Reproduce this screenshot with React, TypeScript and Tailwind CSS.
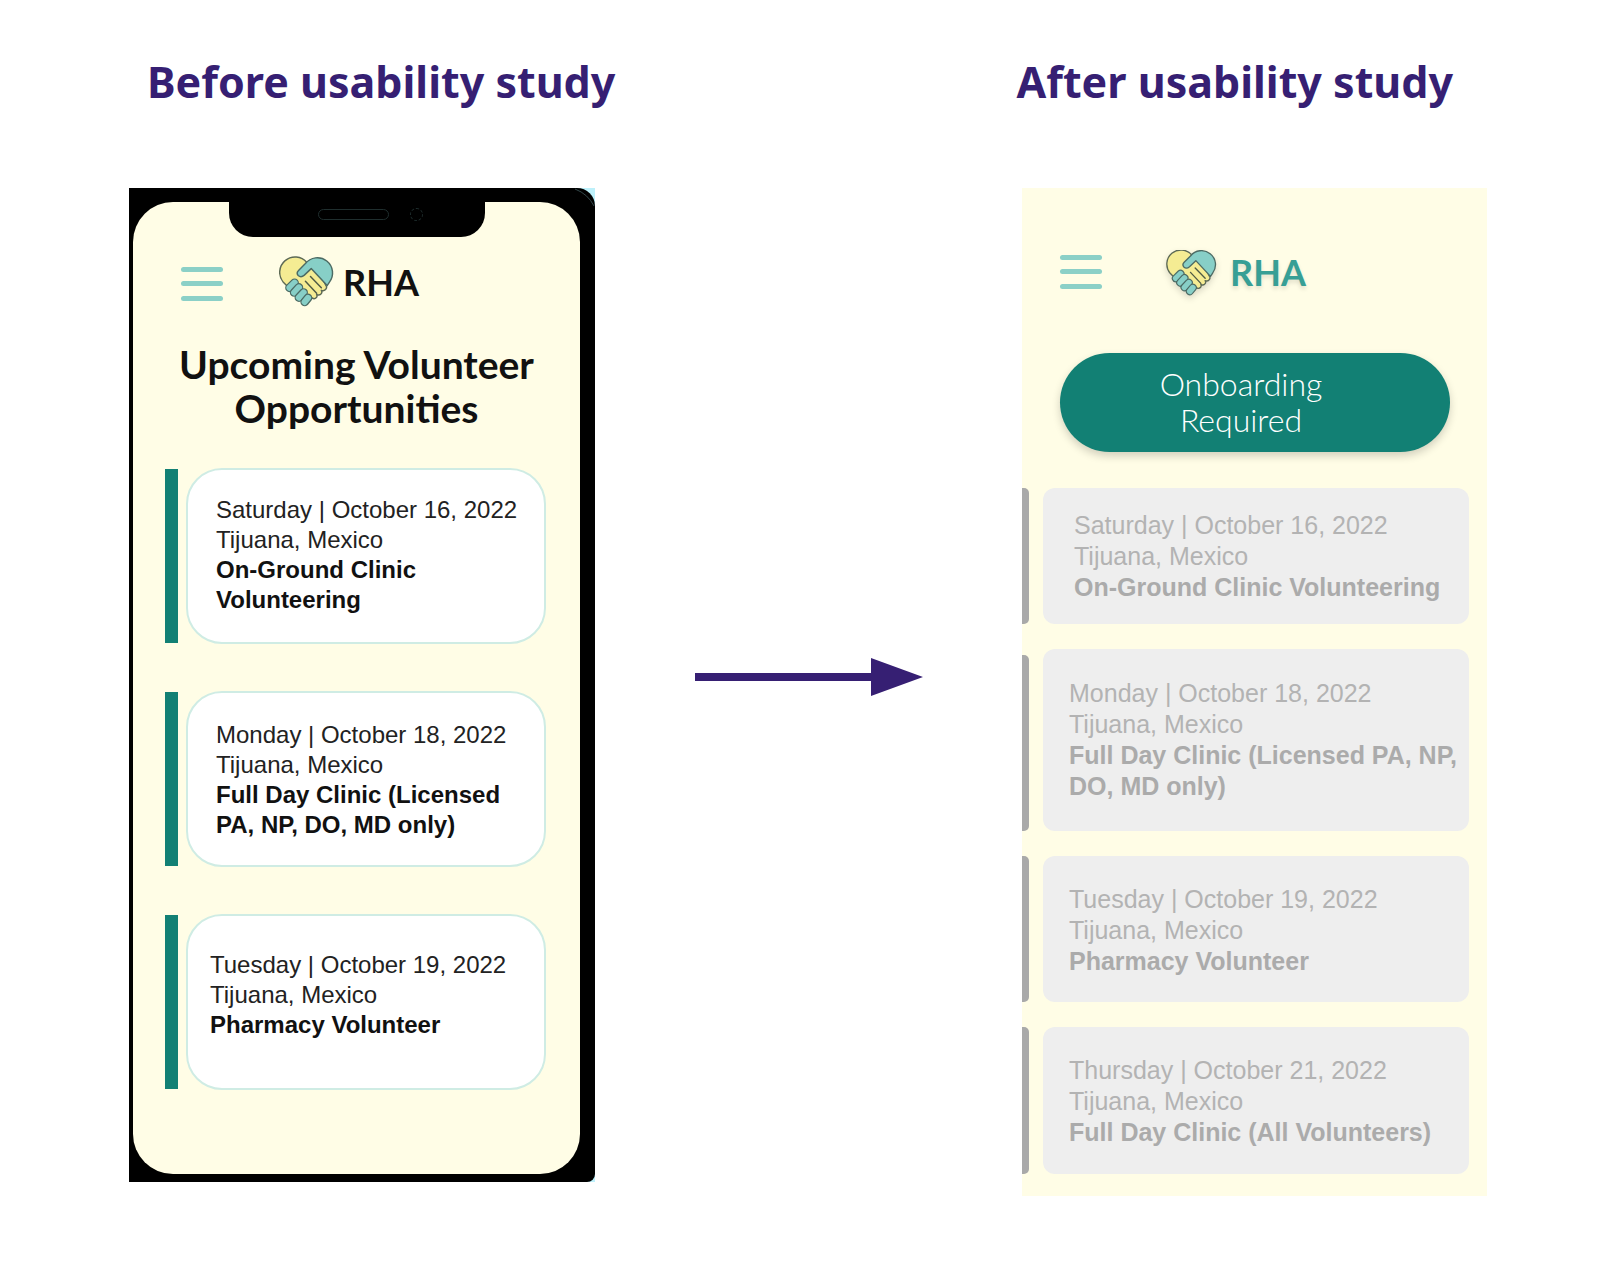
import React from "react";

type Opportunity = {
  date: string;
  place: string;
  title: string;
  box: string;
  bar: string;
};

const before: Opportunity[] = [
  { date: "Saturday | October 16, 2022", place: "Tijuana, Mexico", title: "On-Ground Clinic Volunteering", box: "pl-7 pt-[25px]", bar: "" },
  { date: "Monday | October 18, 2022", place: "Tijuana, Mexico", title: "Full Day Clinic (Licensed PA, NP, DO, MD only)", box: "pl-7 pt-[27px]", bar: "" },
  { date: "Tuesday | October 19, 2022", place: "Tijuana, Mexico", title: "Pharmacy Volunteer", box: "pl-[22px] pt-[34px]", bar: "" },
];

const after: Opportunity[] = [
  { date: "Saturday | October 16, 2022", place: "Tijuana, Mexico", title: "On-Ground Clinic Volunteering", box: "pl-[31px] pt-[22px] pb-[21px]", bar: "" },
  { date: "Monday | October 18, 2022", place: "Tijuana, Mexico", title: "Full Day Clinic (Licensed PA, NP, DO, MD only)", box: "pl-[26px] py-[29px]", bar: "mt-[6px]" },
  { date: "Tuesday | October 19, 2022", place: "Tijuana, Mexico", title: "Pharmacy Volunteer", box: "pl-[26px] pt-[28px] pb-[25px]", bar: "" },
  { date: "Thursday | October 21, 2022", place: "Tijuana, Mexico", title: "Full Day Clinic (All Volunteers)", box: "pl-[26px] pt-[28px] pb-[26px]", bar: "" },
];

const fingers = [
  [43, 71, 29, 85],
  [55, 84, 42, 98],
  [68, 98, 55, 112],
  [80, 113, 71, 124],
];

function HeartHands({ className }: { className: string }) {
  return (
    <svg viewBox="0 0 152 138" className={className} aria-hidden="true" fill="none" strokeLinecap="round" strokeLinejoin="round">
      <path
        d="M77 15 A42 42 0 0 0 12 70 L71 130 L92 113 Q98 118 104 111 Q106 108 104 103 Q112 108 117 101 Q120 97 117 92 Q126 95 130 88 Q133 83 130 79 L110 40 Z"
        fill="#f5ec93"
        stroke="#5d6a55"
        strokeWidth="4"
      />
      <path
        d="M73 18 A42 42 0 0 1 139 70 L133 79 L89 32 L70 50 Q61 58 53 51 Q47 44 54 37 Z"
        fill="#87cfc7"
        stroke="#4c6b64"
        strokeWidth="4"
      />
      <path d="M87 54 L117 85 M73 67 L104 100" stroke="#4e5a45" strokeWidth="4" />
      {fingers.map(([x1, y1, x2, y2]) => (
        <g key={x1}>
          <path d={`M${x1} ${y1} L${x2} ${y2}`} stroke="#4c6b64" strokeWidth="24" />
          <path d={`M${x1} ${y1} L${x2} ${y2}`} stroke="#87cfc7" strokeWidth="17" />
        </g>
      ))}
    </svg>
  );
}

function MenuButton() {
  return (
    <button type="button" aria-label="Menu" className="flex w-[42px] flex-col gap-[9px]">
      <span className="h-[5px] rounded-full bg-[#8bd0c7]" />
      <span className="h-[5px] rounded-full bg-[#8bd0c7]" />
      <span className="mt-px h-[5px] rounded-full bg-[#8bd0c7]" />
    </button>
  );
}

function Phone() {
  return (
    <section className="bg-[#bdf0fa]">
      <div className="relative rounded-tr-[18px] rounded-br-[8px] bg-black pt-[14px] pr-[15px] pb-[8px] pl-1">
        <svg className="absolute top-0 right-0 h-6 w-6" viewBox="0 0 24 24" fill="none" aria-hidden="true">
          <path d="M4 1 Q17 6 23 18" stroke="#33474a" />
        </svg>
        <div className="min-h-[972px] rounded-[40px] bg-[#fffde6] pb-[82px] font-['Liberation_Sans']">
          <div className="mr-[95px] ml-[96px] flex h-[35px] justify-center rounded-b-[24px] bg-black">
            <span className="mt-[7px] ml-[26px] h-[11px] w-[71px] rounded-full border border-[#1f2e2e]" />
            <span className="mt-[6px] ml-[21px] h-[13px] w-[13px] rounded-full border border-dashed border-[#1f2e2e]" />
          </div>
          <header className="mt-[19px] flex items-start pl-12">
            <div className="mt-[11px]">
              <MenuButton />
            </div>
            <HeartHands className="ml-[56px] h-[52px] w-[55px]" />
            <span className="mt-1 ml-[9px] font-['Lato'] text-[36px] leading-[44px] font-bold text-[#111]">RHA</span>
          </header>
          <h2 className="mt-[34px] text-center font-['Lato'] text-[39px] leading-[44px] font-bold whitespace-nowrap text-[#111]">
            Upcoming Volunteer
            <br />
            Opportunities
          </h2>
          <ul className="mt-[38px] flex flex-col gap-[47px] pr-[34px] pl-8">
            {before.map((o) => (
              <li key={o.date} className="flex min-h-[176px] gap-[8px]">
                <span className="my-px w-[13px] shrink-0 bg-[#128074]" />
                <div className={`grow rounded-[36px] border-2 border-[#cfece4] bg-white pr-6 text-[24px] leading-[30px] text-[#222] ${o.box}`}>
                  <p className="whitespace-nowrap">{o.date}</p>
                  <p>{o.place}</p>
                  <p className="font-bold text-[#111]">{o.title}</p>
                </div>
              </li>
            ))}
          </ul>
        </div>
      </div>
    </section>
  );
}

function Revised() {
  return (
    <section className="bg-[#fffde6] pb-[22px] font-['Liberation_Sans']">
      <header className="flex items-start pt-[62px] pl-[38px]">
        <div className="mt-[5px]">
          <MenuButton />
        </div>
        <HeartHands className="ml-[64px] h-[46px] w-[51px] drop-shadow-[0_3px_3px_rgba(0,0,0,0.15)]" />
        <span className="ml-[13px] font-['Lato'] text-[36px] leading-[44px] font-bold text-[#379f95] [text-shadow:0_3px_4px_rgba(0,0,0,0.12)]">RHA</span>
      </header>
      <button
        type="button"
        className="mt-[57px] ml-[38px] block w-[390px] max-w-full rounded-full bg-[#128074] pt-[13px] pr-7 pb-[14px] text-center font-['Lato'] text-[32px] leading-9 font-light text-white shadow-[0_4px_8px_rgba(0,0,0,0.18)]"
      >
        Onboarding
        <br />
        Required
      </button>
      <ul className="mt-[36px] flex flex-col gap-[25px] pr-[18px]">
        {after.map((o) => (
          <li key={o.date} className="flex gap-[14px]">
            <span className={`w-[7px] shrink-0 rounded-r-[5px] bg-[#a9a9a9] ${o.bar}`} />
            <div className={`grow rounded-xl bg-[#eeeeee] pr-2 text-[25px] leading-[31px] text-[#b3b3b3] ${o.box}`}>
              <p className="whitespace-nowrap">{o.date}</p>
              <p>{o.place}</p>
              <p className="font-bold text-[#ababab]">{o.title}</p>
            </div>
          </li>
        ))}
      </ul>
    </section>
  );
}

export default function App() {
  return (
    <main className="min-h-screen bg-white pt-[52px] pb-16">
      <div className="flex justify-between pr-[163px] pl-[147px] font-['Noto_Sans'] text-[43px] leading-[60px] font-bold whitespace-nowrap text-[#361f73]">
        <h1>Before usability study</h1>
        <h1>After usability study</h1>
      </div>
      <div className="mt-[76px] grid grid-cols-[466fr_427fr_465fr] items-start px-[129px]">
        <Phone />
        <svg viewBox="0 0 228 38" className="mt-[470px] h-[38px] w-[228px] justify-self-center" aria-hidden="true">
          <path d="M0 15h176V0l52 19-52 19V23H0z" fill="#361f73" />
        </svg>
        <Revised />
      </div>
    </main>
  );
}
